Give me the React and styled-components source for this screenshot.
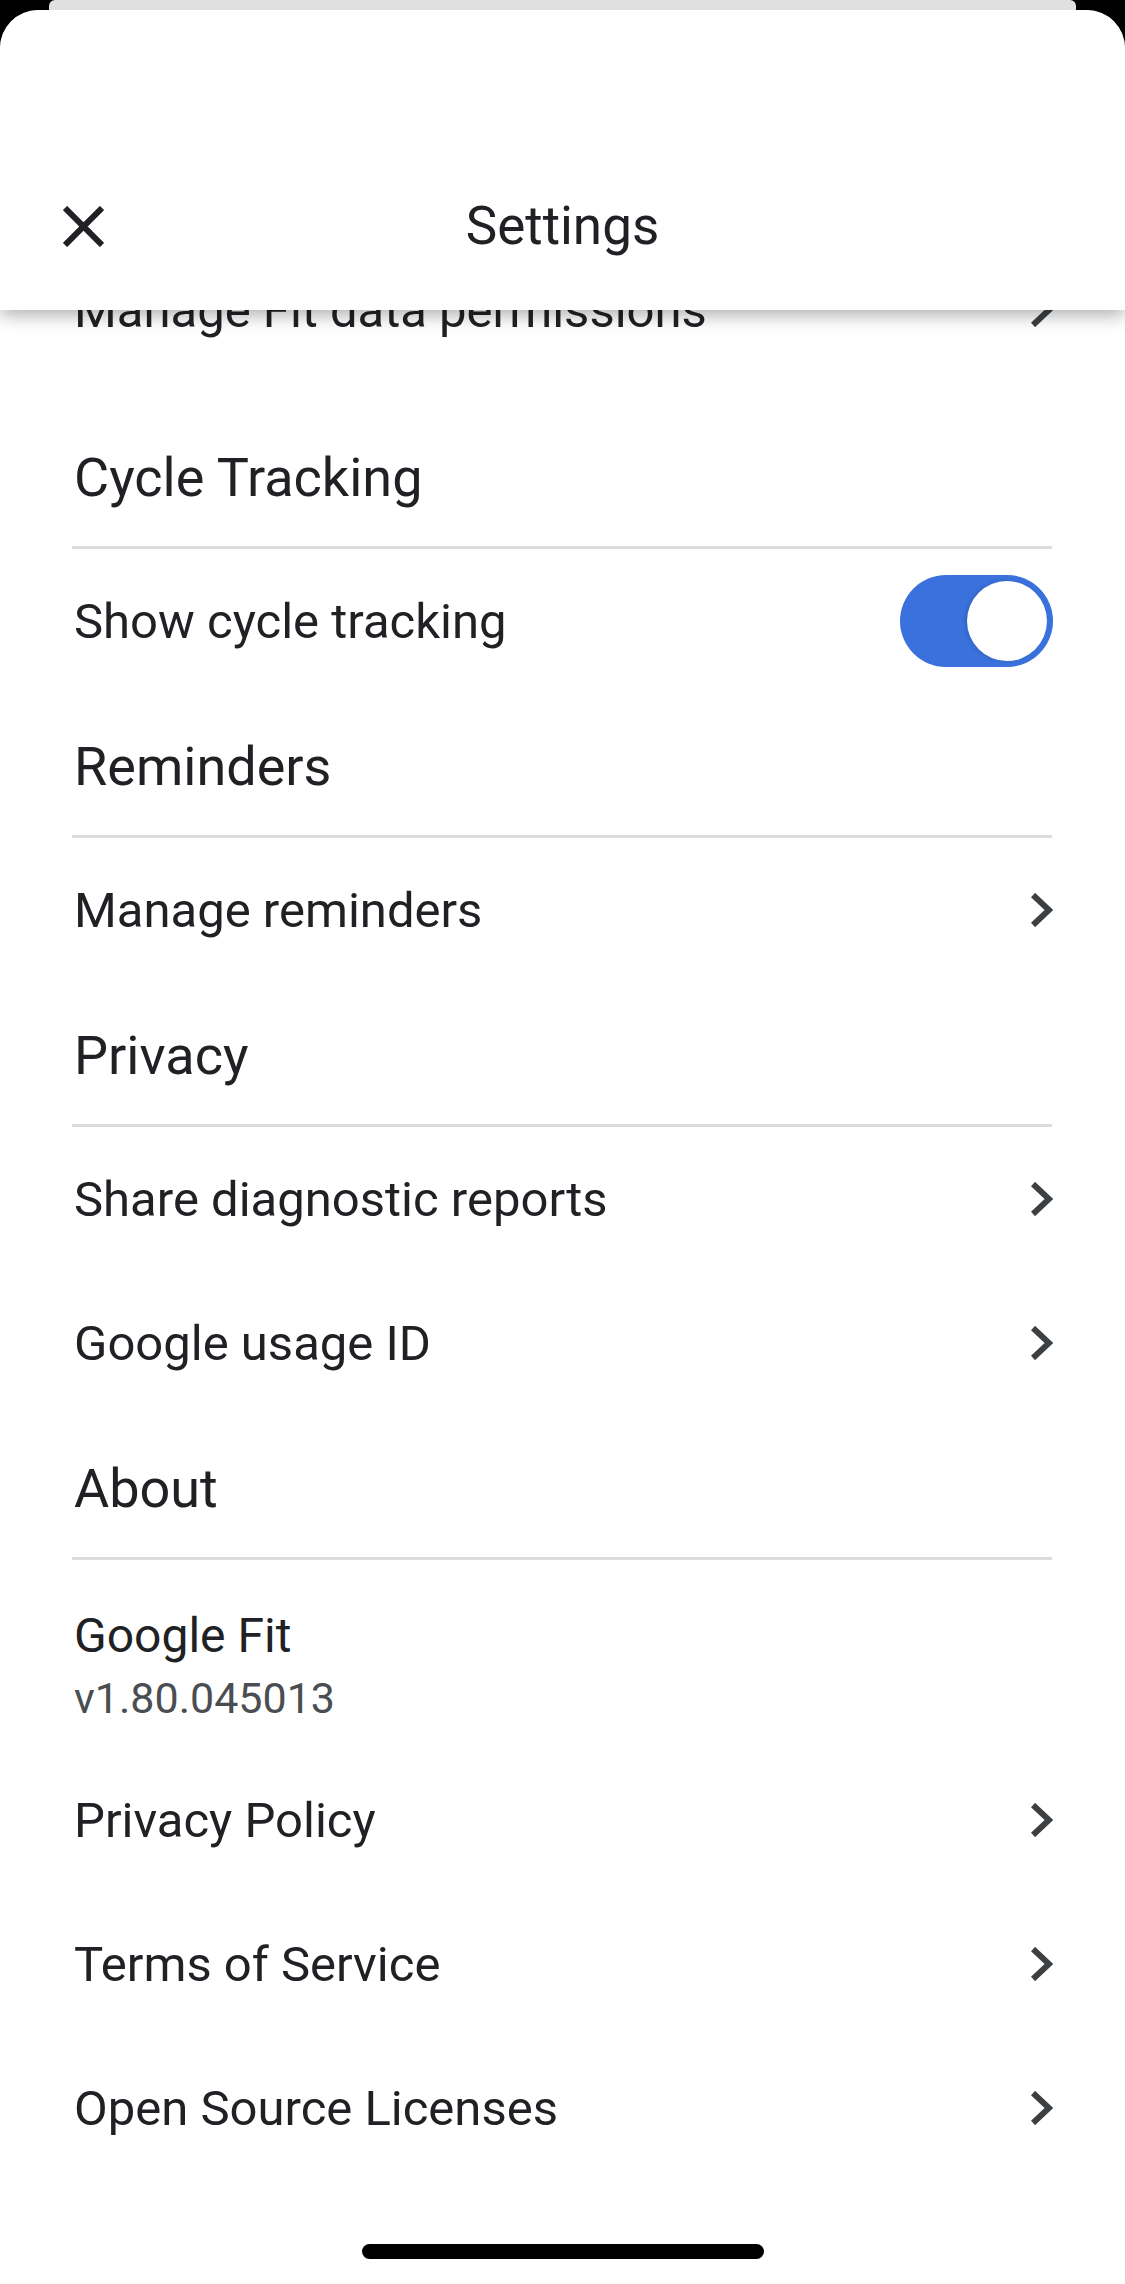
import React from 'react'
import styled, { createGlobalStyle } from 'styled-components'

const GlobalStyle = createGlobalStyle`
  html, body {
    margin: 0;
    padding: 0;
    background: #000;
  }
  body {
    font-family: Roboto, "Noto Sans", Arial, sans-serif;
    -webkit-font-smoothing: antialiased;
  }
`

const sections = [
  {
    items: [{ label: 'Manage Fit data permissions', type: 'link' }]
  },
  {
    title: 'Cycle Tracking',
    spaced: true,
    items: [{ label: 'Show cycle tracking', type: 'toggle' }]
  },
  {
    title: 'Reminders',
    items: [{ label: 'Manage reminders', type: 'link' }]
  },
  {
    title: 'Privacy',
    items: [
      { label: 'Share diagnostic reports', type: 'link' },
      { label: 'Google usage ID', type: 'link' }
    ]
  },
  {
    title: 'About',
    items: [
      { label: 'Google Fit', sub: 'v1.80.045013', type: 'info' },
      { label: 'Privacy Policy', type: 'link' },
      { label: 'Terms of Service', type: 'link' },
      { label: 'Open Source Licenses', type: 'link' }
    ]
  }
]

const Screen = styled.div`
  width: 1125px;
  min-height: 2284px;
  background: #000;
  display: flex;
  flex-direction: column;
  overflow: hidden;
`

const BackSheet = styled.div`
  height: 10px;
  margin: 0 49px;
  background: #e0e0e0;
  border-radius: 6px 6px 0 0;
`

const Sheet = styled.div`
  flex: 1;
  background: #fff;
  border-radius: 38px 38px 0 0;
  display: flex;
  flex-direction: column;
  overflow: hidden;
`

const Header = styled.header`
  position: relative;
  z-index: 1;
  height: 300px;
  box-sizing: border-box;
  padding: 132px 63px 0;
  display: grid;
  grid-template-columns: 1fr auto 1fr;
  align-items: center;
  background: #fff;
  border-radius: 38px 38px 0 0;
  box-shadow: 0 5px 18px rgba(0, 0, 0, 0.32);
`

const CloseButton = styled.button`
  justify-self: start;
  width: 41px;
  height: 41px;
  padding: 0;
  border: 0;
  background: none;
  display: flex;
  color: #202124;
`

const Title = styled.h1`
  margin: 0;
  font-size: 53px;
  font-weight: 400;
  color: #202124;
  line-height: 1;
`

const List = styled.div`
  margin-top: -72px;
  display: flex;
  flex-direction: column;
`

const SectionTitle = styled.div`
  height: 145px;
  margin: ${({ $spaced }) => ($spaced ? '22px' : '0')} 73px 0 72px;
  padding: 5px 0 0 2px;
  box-sizing: border-box;
  display: flex;
  align-items: center;
  border-bottom: 3px solid #dadce0;
  font-size: 54px;
  color: #202124;
`

const Row = styled.div`
  min-height: 144px;
  padding: 0 72px 0 74px;
  display: flex;
  align-items: center;
  justify-content: space-between;
`

const Label = styled.span`
  font-size: 49px;
  color: #202124;
`

const InfoBlock = styled.div`
  padding: 46px 0 24px;
  display: flex;
  flex-direction: column;
`

const InfoTitle = styled.span`
  font-size: 48px;
  line-height: 60px;
  color: #202124;
`

const InfoSub = styled.span`
  margin-top: 6px;
  font-size: 43px;
  line-height: 52px;
  color: #4a4d51;
`

const Track = styled.div`
  width: 153px;
  height: 92px;
  box-sizing: border-box;
  padding: 6px;
  border-radius: 46px;
  background: #3a71dc;
  display: flex;
  justify-content: ${({ $on }) => ($on ? 'flex-end' : 'flex-start')};
`

const Knob = styled.div`
  width: 80px;
  height: 80px;
  border-radius: 50%;
  background: #fff;
  box-shadow: -2px 0 4px rgba(0, 0, 0, 0.12);
`

const HomeBar = styled.div`
  align-self: center;
  width: 402px;
  height: 15px;
  margin: 64px 0 24px;
  border-radius: 8px;
  background: #000;
`

const CloseIcon = () => (
  <svg width="41" height="41" viewBox="0 0 41 41">
    <path d="M2 2L39 39M39 2L2 39" stroke="currentColor" strokeWidth="6" fill="none" />
  </svg>
)

const Chevron = () => (
  <svg width="22" height="34" viewBox="0 0 22 34">
    <path d="M2 2L18 17L2 32" stroke="#3c4043" strokeWidth="6" fill="none" strokeLinejoin="miter" />
  </svg>
)

const Item = ({ label, sub, type }) => {
  if (type === 'info') {
    return (
      <Row>
        <InfoBlock>
          <InfoTitle>{label}</InfoTitle>
          <InfoSub>{sub}</InfoSub>
        </InfoBlock>
      </Row>
    )
  }
  return (
    <Row>
      <Label>{label}</Label>
      {type === 'toggle'
        ? <Track $on><Knob /></Track>
        : <Chevron />}
    </Row>
  )
}

export default function App () {
  return (
    <>
      <GlobalStyle />
      <Screen>
        <BackSheet />
        <Sheet>
          <Header>
            <CloseButton aria-label="Close"><CloseIcon /></CloseButton>
            <Title>Settings</Title>
          </Header>
          <List>
            {sections.map((s, i) => (
              <React.Fragment key={i}>
                {s.title ? <SectionTitle $spaced={s.spaced}>{s.title}</SectionTitle> : null}
                {s.items.map((it) => <Item key={it.label} {...it} />)}
              </React.Fragment>
            ))}
          </List>
          <HomeBar />
        </Sheet>
      </Screen>
    </>
  )
}
